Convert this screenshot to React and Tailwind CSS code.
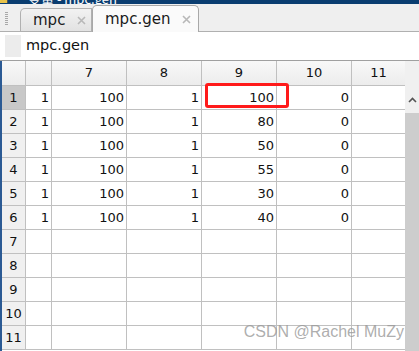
const rows = [
  [1, 100, 1, 100, 0],
  [1, 100, 1, 80, 0],
  [1, 100, 1, 50, 0],
  [1, 100, 1, 55, 0],
  [1, 100, 1, 30, 0],
  [1, 100, 1, 40, 0],
];

const cols = ["", "7", "8", "9", "10", "11"];
const widths = ["w-[26px]", "w-[75px]", "w-[75px]", "w-[75px]", "w-[75px]", "flex-1"];

function CloseX() {
  return (
    <svg width="9" height="9" viewBox="0 0 9 9" className="shrink-0">
      <path d="M1 1 L8 8 M8 1 L1 8" stroke="#b8b8b8" strokeWidth="1.6" />
    </svg>
  );
}

function TabBar() {
  return (
    <div className="flex items-end h-[28px] bg-[#efefef] border-b border-[#b0b0b0]">
      <div className="self-center flex flex-col gap-[1px] ml-[5px] mr-[12px] mt-[2px]">
        {[0, 1, 2, 3, 4, 5, 6].map((i) => (
          <div key={i} className="w-[3px] h-[1px] bg-[#a8a8a8]" />
        ))}
      </div>
      <div className="h-[23px] w-[72px] flex items-center pl-[12px] pr-[5px] justify-between bg-gradient-to-b from-[#f2f2f2] to-[#e2e2e2] border border-b-0 border-[#b0b0b0] rounded-tl-[5px] text-[15px] text-[#1a1a1a]">
        <span>mpc</span>
        <CloseX />
      </div>
      <div className="h-[27px] w-[107px] -mb-px flex items-center pl-[12px] pr-[7px] justify-between bg-[#fafafa] border border-b-0 border-[#a8a8a8] rounded-t-[5px] text-[15px] text-[#1a1a1a]">
        <span>mpc.gen</span>
        <CloseX />
      </div>
    </div>
  );
}

function App() {
  return (
    <div className="relative w-[419px] h-[351px] overflow-hidden bg-white flex flex-col font-['DejaVu_Sans',sans-serif]">
      <div className="h-[4px] bg-[#0a3d70] flex items-end overflow-hidden shrink-0">
        <div className="w-[8px] h-[3px] self-start bg-[#e8c34a] border-r border-[#555]" />
        <span className="ml-[20px] text-[13px] leading-[13px] -mb-[1px] text-white font-['Noto_Sans_CJK_SC',sans-serif]">
          变量 - mpc.gen
        </span>
      </div>
      <TabBar />
      <div className="h-[28px] flex items-center bg-white shrink-0">
        <div className="w-[16px] h-[22px] bg-[#ececec] ml-[5px] mr-[5px]" />
        <span className="text-[14.5px] text-[#111]">mpc.gen</span>
      </div>
      <div className="flex-1 flex border-t border-[#a0a0a0]">
        <div className="w-[2px] bg-[#2b5a94]" />
        <div className="flex-1 flex flex-col text-[13px] text-[#111]">
          <div className="flex h-[25px] border-b border-[#c0c0c0] bg-gradient-to-b from-[#f8f8f8] to-[#ececec]">
            <div className="w-[24px] border-r border-[#c0c0c0]" />
            {cols.map((c, i) => (
              <div
                key={i}
                className={`${widths[i]} flex items-center justify-center ${i < 5 ? "border-r border-[#c0c0c0]" : ""}`}
              >
                {c}
              </div>
            ))}
          </div>
          {Array.from({ length: 11 }).map((_, r) => (
            <div key={r} className="flex h-[24px] shrink-0 border-b border-[#c0c0c0]">
              <div
                className={`w-[24px] flex items-center justify-center border-r border-[#c0c0c0] ${r === 0 ? "bg-[#c8c8c8]" : "bg-[#f0f0f0]"}`}
              >
                {r + 1}
              </div>
              {widths.map((w, i) => (
                <div
                  key={i}
                  className={`${w} flex items-center justify-end pr-[2px] ${i < 5 ? "border-r border-[#c0c0c0]" : ""}`}
                >
                  {rows[r] && i < 5 ? rows[r][i] : ""}
                </div>
              ))}
            </div>
          ))}
        </div>
        <div className="w-[14px] flex flex-col bg-[#f0f0f0]">
          <div className="h-[25px]" />
          <div className="h-[27px] flex items-center justify-center">
            <svg width="9" height="6" viewBox="0 0 9 6">
              <path d="M1 5 L4.5 1.5 L8 5" stroke="#555" strokeWidth="1.6" fill="none" />
            </svg>
          </div>
          <div className="flex-1 bg-[#cdcdcd]" />
        </div>
      </div>
      <div className="absolute left-[205px] top-[83px] w-[84px] h-[25px] border-[3px] border-[#ff1a1a] rounded-[3px]" />
      <div className="absolute right-[15px] top-[320px] text-[16px] font-['Liberation_Sans',sans-serif] text-[#999999]/80">
        CSDN @Rachel MuZy
      </div>
    </div>
  );
}

export default App;
